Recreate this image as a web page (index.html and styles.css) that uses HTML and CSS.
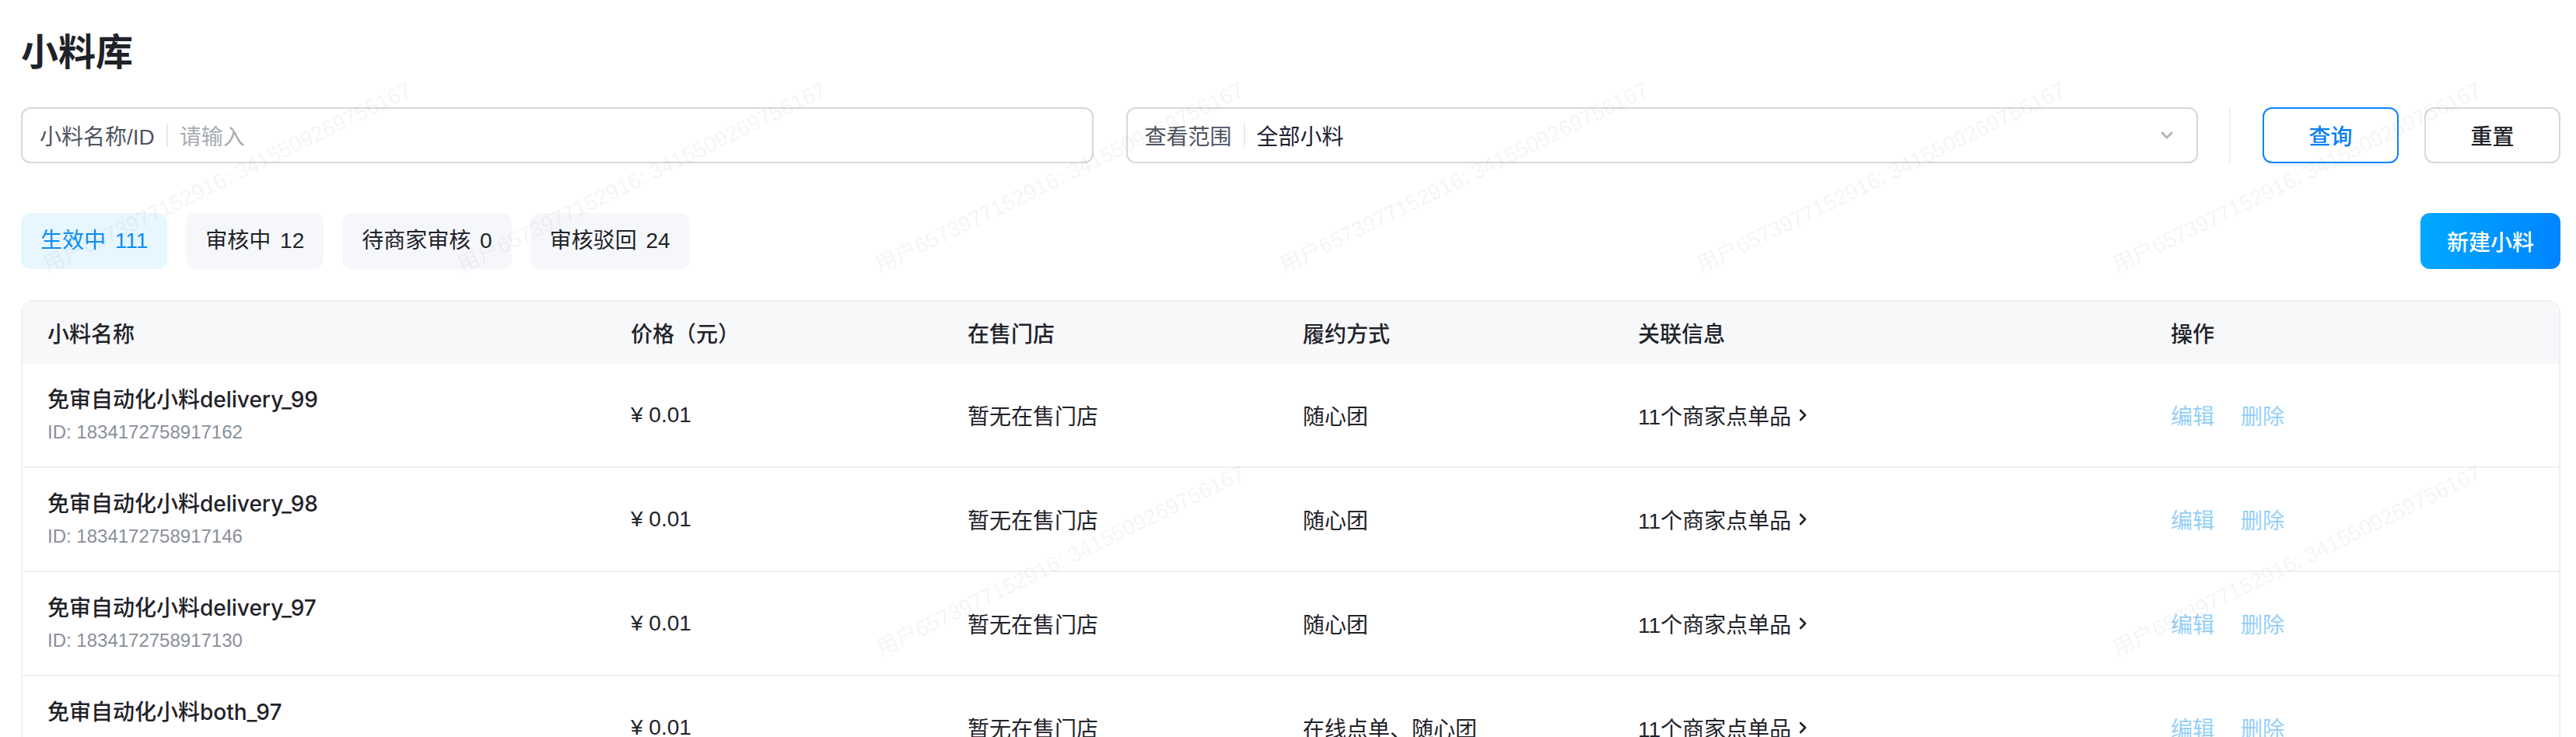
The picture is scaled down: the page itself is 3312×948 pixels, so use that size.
FILE: index.html
```html
<!DOCTYPE html>
<html lang="zh-CN">
<head>
    <meta charset="UTF-8">
    <title>小料库</title>
    <meta name="viewport" content="width=device-width, initial-scale=1.0">
    <link rel="stylesheet" href="styles.css">
</head>
<body>

    <div class="page">
        <h1 class="title">小料库</h1>

        <div class="filters">
            <div class="field">
                <span class="field-label">小料名称/ID</span>
                <span class="field-sep"></span>
                <span class="field-placeholder">请输入</span>
            </div>
            <div class="field">
                <span class="field-label">查看范围</span>
                <span class="field-sep"></span>
                <span class="field-value">全部小料</span>
                <svg class="field-arrow" width="16" height="10" viewBox="0 0 16 10">
                    <polyline points="2,2 8,8 14,2" fill="none" stroke="#b1b4bb" stroke-width="3" stroke-linecap="round" stroke-linejoin="round"/>
                </svg>
            </div>
            <span class="filters-divider"></span>
            <button class="btn btn-primary-line">查询</button>
            <button class="btn btn-default">重置</button>
        </div>

        <div class="toolbar">
            <div class="tabs">
                <span class="tab active">生效中 111</span>
                <span class="tab">审核中 12</span>
                <span class="tab">待商家审核 0</span>
                <span class="tab">审核驳回 24</span>
            </div>
            <button class="btn btn-create">新建小料</button>
        </div>

        <div class="table-wrap">
            <table class="table">
                <colgroup>
                    <col style="width: 750px">
                    <col style="width: 433px">
                    <col style="width: 431px">
                    <col style="width: 431px">
                    <col style="width: 685px">
                    <col>
                </colgroup>
                <thead>
                    <tr>
                        <th>小料名称</th>
                        <th>价格（元）</th>
                        <th>在售门店</th>
                        <th>履约方式</th>
                        <th>关联信息</th>
                        <th>操作</th>
                    </tr>
                </thead>
                <tbody>
                    <tr>
                        <td>
                            <div class="item-name">免审自动化小料delivery_99</div>
                            <div class="item-id">ID: 1834172758917162</div>
                        </td>
                        <td>¥ 0.01</td>
                        <td>暂无在售门店</td>
                        <td>随心团</td>
                        <td><span class="link-info">11个商家点单品<svg width="10" height="16" viewBox="0 0 10 16"><polyline points="2,2 8,8 2,14" fill="none" stroke="#1f2329" stroke-width="2.6" stroke-linecap="round" stroke-linejoin="round"/></svg></span></td>
                        <td><span class="action">编辑</span><span class="action">删除</span></td>
                    </tr>
                    <tr>
                        <td>
                            <div class="item-name">免审自动化小料delivery_98</div>
                            <div class="item-id">ID: 1834172758917146</div>
                        </td>
                        <td>¥ 0.01</td>
                        <td>暂无在售门店</td>
                        <td>随心团</td>
                        <td><span class="link-info">11个商家点单品<svg width="10" height="16" viewBox="0 0 10 16"><polyline points="2,2 8,8 2,14" fill="none" stroke="#1f2329" stroke-width="2.6" stroke-linecap="round" stroke-linejoin="round"/></svg></span></td>
                        <td><span class="action">编辑</span><span class="action">删除</span></td>
                    </tr>
                    <tr>
                        <td>
                            <div class="item-name">免审自动化小料delivery_97</div>
                            <div class="item-id">ID: 1834172758917130</div>
                        </td>
                        <td>¥ 0.01</td>
                        <td>暂无在售门店</td>
                        <td>随心团</td>
                        <td><span class="link-info">11个商家点单品<svg width="10" height="16" viewBox="0 0 10 16"><polyline points="2,2 8,8 2,14" fill="none" stroke="#1f2329" stroke-width="2.6" stroke-linecap="round" stroke-linejoin="round"/></svg></span></td>
                        <td><span class="action">编辑</span><span class="action">删除</span></td>
                    </tr>
                    <tr>
                        <td>
                            <div class="item-name">免审自动化小料both_97</div>
                            <div class="item-id">ID: 1834172758917114</div>
                        </td>
                        <td>¥ 0.01</td>
                        <td>暂无在售门店</td>
                        <td>在线点单、随心团</td>
                        <td><span class="link-info">11个商家点单品<svg width="10" height="16" viewBox="0 0 10 16"><polyline points="2,2 8,8 2,14" fill="none" stroke="#1f2329" stroke-width="2.6" stroke-linecap="round" stroke-linejoin="round"/></svg></span></td>
                        <td><span class="action">编辑</span><span class="action">删除</span></td>
                    </tr>
                </tbody>
            </table>
        </div>
    </div>

    <div class="watermark" id="watermark"></div>

    <script>
        // 水印位置（左下角坐标）
        const marks = [
            [-468, 357], [64, 357], [597, 357], [1134, 357], [1654, 357], [2190, 357], [2725, 357],
            [-468, 850], [1135, 850], [2725, 850]
        ];
        const layer = document.getElementById('watermark');
        marks.forEach(([x, y]) => {
            const span = document.createElement('span');
            span.className = 'watermark-text';
            span.textContent = '用户6573977152916: 3415509269756167';
            span.style.left = x + 'px';
            span.style.top = (y - 30) + 'px';
            layer.appendChild(span);
        });
    </script>

</body>
</html>
```

FILE: styles.css
```css
* {
    margin: 0;
    padding: 0;
    box-sizing: border-box;
}

html, body {
    overflow: hidden;
}

body {
    font-family: 'Liberation Sans', 'Noto Sans CJK SC', sans-serif;
    background-color: #fff;
    color: #1f2329;
    font-size: 28px;
}

.page {
    padding: 28px 20px 0 27px;
}

.title {
    font-family: 'Noto Sans CJK SC', sans-serif;
    font-size: 48px;
    line-height: 70px;
    font-weight: 700;
    color: #1f2329;
    margin-bottom: 40px;
}

/* 筛选栏 */
.filters {
    display: flex;
    align-items: center;
    height: 72px;
}

.field {
    flex: 1;
    height: 72px;
    display: flex;
    align-items: center;
    border: 2px solid #d5d8de;
    border-radius: 12px;
    padding: 0 30px 0 22px;
    background-color: #fff;
}

.field + .field {
    margin-left: 42px;
}

.field-label {
    color: #4e5461;
}

.field-sep {
    width: 2px;
    height: 30px;
    background-color: #e6e8ec;
    margin: 0 15px;
}

.field-placeholder {
    color: #a8abb3;
}

.field-value {
    color: #1f2033;
}

.field-arrow {
    margin-left: auto;
}

.filters-divider {
    width: 2px;
    height: 72px;
    background-color: #eef0f3;
    margin: 0 41px 0 40px;
}

.btn {
    font-family: 'Noto Sans CJK SC', sans-serif;
    font-size: 28px;
    font-weight: 500;
    height: 72px;
    border-radius: 12px;
    cursor: pointer;
}

.btn-primary-line {
    width: 175px;
    border: 2px solid #0a84ff;
    color: #0a7ff5;
    background-color: #fff;
}

.btn-default {
    width: 175px;
    margin-left: 33px;
    border: 2px solid #d5d8de;
    color: #1f2329;
    background-color: #fff;
}

/* 状态页签 */
.toolbar {
    display: flex;
    align-items: center;
    margin-top: 64px;
}

.tabs {
    display: flex;
    gap: 24px;
}

.tab {
    height: 72px;
    line-height: 72px;
    padding: 0 25px;
    border-radius: 12px;
    background-color: #f5f7fa;
    color: #1f2329;
    word-spacing: 4px;
}

.tab.active {
    background-color: #e8f6ff;
    color: #0a8ef5;
}

.btn-create {
    margin-left: auto;
    width: 180px;
    border: none;
    color: #fff;
    background: linear-gradient(90deg, #00a8ff, #0085ff);
}

/* 表格 */
.table-wrap {
    margin-top: 40px;
    border: 2px solid #eef0f3;
    border-bottom: none;
    border-radius: 16px 16px 0 0;
    overflow: hidden;
}

.table {
    width: 100%;
    table-layout: fixed;
    border-collapse: separate;
    border-spacing: 0;
}

.table th {
    height: 80px;
    padding: 0 32px;
    text-align: left;
    font-family: 'Noto Sans CJK SC', sans-serif;
    font-weight: 500;
    background-color: #f7f8fa;
    color: #1f2329;
}

.table td {
    height: 134px;
    padding: 0 32px;
    border-bottom: 2px solid #f0f1f5;
    vertical-align: middle;
    white-space: nowrap;
}

.item-name {
    font-family: 'Inter', 'Noto Sans CJK SC', sans-serif;
    line-height: 40px;
    font-weight: 500;
}

.item-id {
    margin-top: 4px;
    line-height: 36px;
    font-size: 24px;
    color: #8a8f99;
}

.link-info {
    display: inline-flex;
    align-items: center;
    gap: 10px;
}

.action {
    color: #93cff8;
    cursor: pointer;
}

.action + .action {
    margin-left: 34px;
}

/* 水印 */
.watermark {
    position: fixed;
    top: 0;
    left: 0;
    width: 100%;
    height: 100%;
    pointer-events: none;
    overflow: hidden;
}

.watermark-text {
    position: absolute;
    font-family: 'Liberation Sans', 'Noto Sans CJK SC', sans-serif;
    font-size: 28px;
    line-height: 30px;
    white-space: nowrap;
    color: rgba(0, 0, 0, 0.045);
    transform: rotate(-26deg);
    transform-origin: 0 100%;
}
```
